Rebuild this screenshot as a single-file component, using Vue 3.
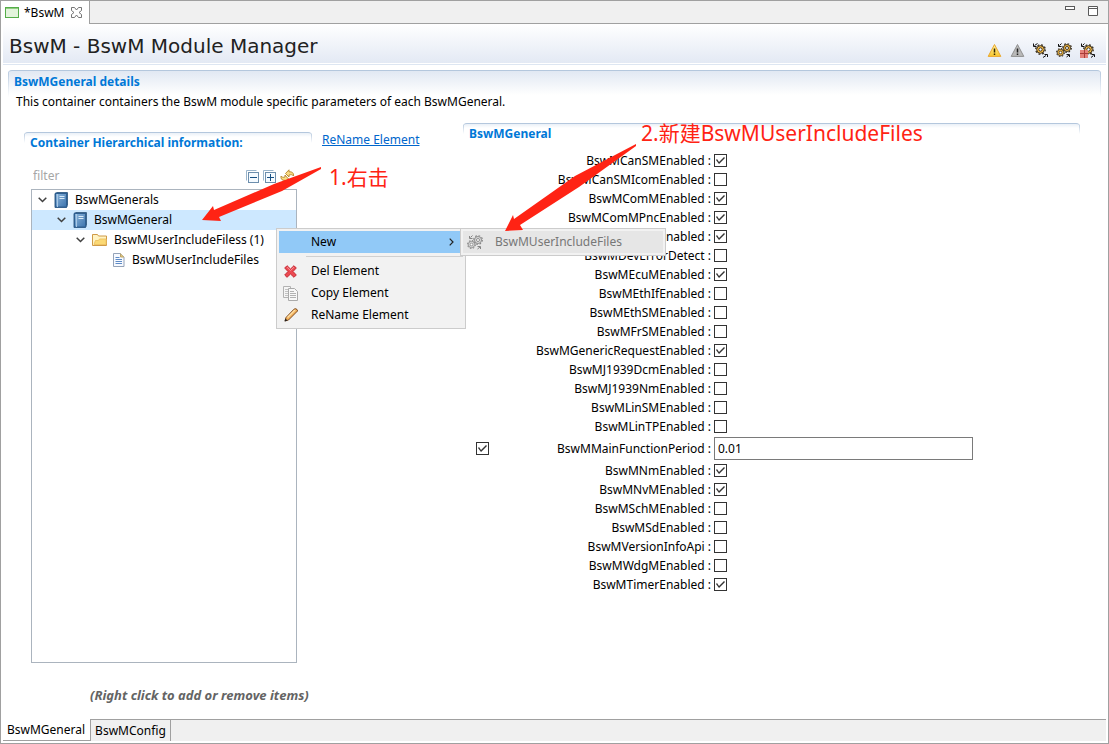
<script setup>
import { ref } from 'vue'

const filter = ref('')
const activePage = ref('BswMGeneral')
const pages = ['BswMGeneral', 'BswMConfig']

const tree = ref([
  { id: 1, level: 0, icon: 'book', label: 'BswMGenerals', open: true },
  { id: 2, level: 1, icon: 'book', label: 'BswMGeneral', open: true },
  { id: 3, level: 2, icon: 'folder', label: 'BswMUserIncludeFiless (1)', open: true },
  { id: 4, level: 3, icon: 'file', label: 'BswMUserIncludeFiles' }
])
const selected = ref(2)

const periodEnabled = ref(true)
const fields = ref([
  { name: 'BswMCanSMEnabled', value: true },
  { name: 'BswMCanSMIcomEnabled', value: false },
  { name: 'BswMComMEnabled', value: true },
  { name: 'BswMComMPncEnabled', value: true },
  { name: 'BswMDcmEnabled', value: true },
  { name: 'BswMDevErrorDetect', value: false },
  { name: 'BswMEcuMEnabled', value: true },
  { name: 'BswMEthIfEnabled', value: false },
  { name: 'BswMEthSMEnabled', value: false },
  { name: 'BswMFrSMEnabled', value: false },
  { name: 'BswMGenericRequestEnabled', value: true },
  { name: 'BswMJ1939DcmEnabled', value: false },
  { name: 'BswMJ1939NmEnabled', value: false },
  { name: 'BswMLinSMEnabled', value: false },
  { name: 'BswMLinTPEnabled', value: false },
  { name: 'BswMMainFunctionPeriod', value: '0.01', text: true },
  { name: 'BswMNmEnabled', value: true },
  { name: 'BswMNvMEnabled', value: true },
  { name: 'BswMSchMEnabled', value: false },
  { name: 'BswMSdEnabled', value: false },
  { name: 'BswMVersionInfoApi', value: false },
  { name: 'BswMWdgMEnabled', value: false },
  { name: 'BswMTimerEnabled', value: true }
])
</script>

<template>
  <div class="editor">
    <!-- shared shapes -->
    <svg class="defs" width="0" height="0" aria-hidden="true">
      <defs>
        <symbol id="gear" viewBox="0 0 10 10">
          <circle cx="5" cy="5" r="4.3" fill="none" stroke="currentColor" stroke-width="1.2" stroke-dasharray="1.7 1.677" />
          <circle cx="5" cy="5" r="3.5" stroke="currentColor" stroke-width="0.9" />
          <circle cx="5" cy="5" r="1.5" fill="#fff" stroke="currentColor" stroke-width="0.9" />
        </symbol>
        <linearGradient id="bookFill" x1="0" y1="0" x2="1" y2="1">
          <stop offset="0" stop-color="#8db6dc" />
          <stop offset="1" stop-color="#3c73ad" />
        </linearGradient>
        <linearGradient id="warnFill" x1="0" y1="0" x2="0" y2="1">
          <stop offset="0" stop-color="#fff3a0" />
          <stop offset="1" stop-color="#f7c62c" />
        </linearGradient>
      </defs>
    </svg>

    <header class="tab-bar">
      <div class="tab">
        <svg width="15" height="12" viewBox="0 0 15 12">
          <rect x="0.5" y="0.5" width="13" height="10" fill="#e3f4dc" stroke="#55ad49" />
          <path d="M1 1.5h12" stroke="#8fce80" />
        </svg>
        <span class="tab-name">*BswM</span>
        <button class="icon-btn" aria-label="Close">
          <svg width="11" height="11" viewBox="0 0 11 11">
            <path d="M0.5 0.5h3l2 2.5 2-2.5h3v3l-2.5 2 2.5 2v3h-3l-2-2.5-2 2.5h-3v-3l2.5-2-2.5-2z" fill="#fff" stroke="#666" stroke-width="0.9" />
          </svg>
        </button>
      </div>
      <div class="window-buttons">
        <button class="icon-btn" aria-label="Minimize">
          <svg width="10" height="10"><rect x="0.5" y="0.5" width="9" height="3" fill="#fff" stroke="#5a5a5a" /></svg>
        </button>
        <button class="icon-btn" aria-label="Maximize">
          <svg width="10" height="10"><path d="M0.5 0.5h9v9h-9zM0.5 2.5h9" fill="#fff" stroke="#5a5a5a" /></svg>
        </button>
      </div>
    </header>

    <div class="form-head">
      <h1>BswM - BswM Module Manager</h1>
      <div class="toolbar">
        <button class="icon-btn" aria-label="Warnings">
          <svg width="15" height="15" viewBox="0 0 15 15">
            <path d="M7.5 1.5 13.8 13.4H1.2z" fill="url(#warnFill)" stroke="#eaa72e" stroke-linejoin="round" />
            <path d="M7.5 5.5v4M7.5 10.5v1.5" stroke="#332500" stroke-width="1.5" />
          </svg>
        </button>
        <button class="icon-btn" aria-label="Warnings disabled">
          <svg width="15" height="15" viewBox="0 0 15 15">
            <path d="M7.5 1.5 13.8 13.4H1.2z" fill="#b9b9b9" stroke="#909090" stroke-linejoin="round" />
            <path d="M7.5 5.5v4M7.5 10.5v1.5" stroke="#222" stroke-width="1.5" />
          </svg>
        </button>
        <button class="icon-btn gear-icon" aria-label="Validate">
          <svg width="15" height="15" viewBox="0 0 15 15">
            <use href="#gear" x="2" y="1" width="11" height="11" />
            <path d="M4.5 0.5 1.5 2.5M0.5 0.5v3h3M10 14.5l3-2M14.500 14v-2.500h-3" fill="none" stroke="#111" />
          </svg>
        </button>
        <button class="icon-btn gear-icon" aria-label="Generate">
          <svg width="16" height="15" viewBox="0 0 16 15">
            <use href="#gear" x="6" y="0" width="10" height="10" />
            <use href="#gear" x="0" y="5" width="9" height="9" />
            <path d="M5.5 0.5 3.5 2.5M2.5 1v2.5h3M10.500 14l2.5-2M13.5 14v-2.500h-3" fill="none" stroke="#111" />
          </svg>
        </button>
        <button class="icon-btn gear-icon" aria-label="Generate all">
          <svg width="16" height="15" viewBox="0 0 16 15">
            <use href="#gear" x="3" y="1" width="11" height="11" />
            <path d="M4.5 0.5 2.5 2.5M1.5 0.5v3h3M11 14.500l2.5-2M14.5 14v-2.500h-3" fill="none" stroke="#111" />
            <rect x="0" y="7" width="8" height="8" fill="#e4817a" />
            <path d="M4.5 7v8M0 10.5h8" stroke="#a93b38" />
          </svg>
        </button>
      </div>
    </div>

    <section class="section details">
      <h2>BswMGeneral details</h2>
      <p>This container containers the BswM module specific parameters of each BswMGeneral.</p>
    </section>

    <main class="columns">
      <div class="left">
        <section class="section">
          <h2>Container Hierarchical information:</h2>
        </section>
        <div class="filter-row">
          <input v-model="filter" type="text" placeholder="filter" aria-label="filter" />
          <button class="icon-btn" aria-label="Collapse all">
            <svg width="13" height="13" viewBox="0 0 13 13">
              <path d="M0.5 10.5v-10h10" fill="none" stroke="#9ab5cc" />
              <rect x="2.5" y="2.5" width="10" height="10" fill="#f4faff" stroke="#6c8ead" />
              <path d="M4 7.5h7" stroke="#174f83" />
            </svg>
          </button>
          <button class="icon-btn" aria-label="Expand all">
            <svg width="13" height="13" viewBox="0 0 13 13">
              <path d="M0.5 10.5v-10h10" fill="none" stroke="#9ab5cc" />
              <rect x="2.5" y="2.5" width="10" height="10" fill="#f4faff" stroke="#6c8ead" />
              <path d="M4 7.5h7M7.5 4v7" stroke="#174f83" />
            </svg>
          </button>
          <button class="icon-btn" aria-label="Refresh">
            <svg width="15" height="14" viewBox="0 0 15 14">
              <path d="M5.5 4.5 9 0.8v2C12 2.5 14 4 13.5 7 12.5 5.5 11 5.5 9 6v2z" fill="#f8db83" stroke="#b5852b" stroke-width="0.9" />
              <path d="M8.5 10 5 13.4v-2C2 11.5 0.5 10 1 7 2 8.5 3.5 8.5 5 8V6z" fill="#f8db83" stroke="#b5852b" stroke-width="0.9" />
            </svg>
          </button>
        </div>
        <ul class="tree">
          <li
            v-for="node in tree"
            :key="node.id"
            :class="['level-' + node.level, { selected: selected === node.id }]"
            @click="selected = node.id"
          >
            <svg class="twistie" width="9" height="6" viewBox="0 0 9 6">
              <path v-if="node.open" d="M0.7 0.7 4.5 4.5 8.3 0.7" fill="none" stroke="#404040" stroke-width="1.5" />
            </svg>
            <svg v-if="node.icon === 'book'" width="14" height="16" viewBox="0 0 14 16">
              <path d="M1 1.5 2.5 0.5h11v13l-1 2H1z" fill="#e4edf5" stroke="#3d658c" />
              <rect x="1.5" y="1.5" width="11" height="13.5" fill="url(#bookFill)" stroke="#2e5f91" />
              <path d="M3.5 2v13" stroke="#a9c9e6" />
              <path d="M5.5 4.5h5M5.5 6.5h5" stroke="#d9eaf7" />
            </svg>
            <svg v-else-if="node.icon === 'folder'" width="15" height="12" viewBox="0 0 15 12">
              <path d="M0.5 11.5v-11h5l1 1.5h8v9.5z" fill="#fff3c3" stroke="#cf9a46" />
              <path d="M2 10.5 3.5 6.5h3l1-1.5h6.500v5.5z" fill="#fbd974" stroke="#efc465" />
            </svg>
            <svg v-else width="12" height="14" viewBox="0 0 12 14">
              <path d="M0.5 0.5h7l3.5 3.5v9.5H0.5z" fill="#f7faff" stroke="#95a3b8" />
              <path d="M7.5 0.5v3.5h3.5" fill="#e7c675" stroke="#b7a46f" />
              <path d="M2.5 4.5h4M2.5 6.5h6.5M2.5 8.5h6.5M2.5 10.5h6.5" stroke="#5e8bc6" />
            </svg>
            <span>{{ node.label }}</span>
          </li>
        </ul>
        <p class="hint">(Right click to add or remove items)</p>
      </div>

      <a class="rename-link" href="#">ReName Element</a>

      <div class="right">
        <section class="section">
          <h2>BswMGeneral</h2>
        </section>
        <div class="fields">
          <div v-for="f in fields" :key="f.name" :class="['field', { tall: f.text }]">
            <input v-if="f.text" v-model="periodEnabled" class="toggle" type="checkbox" :aria-label="'Use ' + f.name" />
            <label :for="f.name">{{ f.name }} :</label>
            <input v-if="f.text" :id="f.name" v-model="f.value" class="value" type="text" />
            <input v-else :id="f.name" v-model="f.value" class="flag" type="checkbox" />
          </div>
        </div>
      </div>
    </main>

    <nav class="pages">
      <button
        v-for="p in pages"
        :key="p"
        :class="{ active: activePage === p }"
        @click="activePage = p"
      >{{ p }}</button>
      <div class="rest"></div>
    </nav>

    <!-- context menu -->
    <div class="menu" role="menu">
      <button class="current" role="menuitem">
        <span class="menu-icon"></span>
        <span>New</span>
        <svg class="more" width="5" height="8" viewBox="0 0 5 8">
          <path d="M0.7 0.7 4 4 0.7 7.3" fill="none" stroke="#222" stroke-width="1.2" />
        </svg>
      </button>
      <hr />
      <button role="menuitem">
        <span class="menu-icon">
          <svg width="15" height="13" viewBox="-1 0 15 13">
            <path d="M0.7 3 3 0.7 6.5 4 10 0.7 12.3 3 9 6.5 12.3 10 10 12.3 6.5 9 3 12.3 0.7 10 4 6.5z" fill="#ec4a51" stroke="#c52b35" stroke-linejoin="round" />
            <path d="M3 2.2 6.5 5.5 10 2.2" fill="none" stroke="#f8929a" />
          </svg>
        </span>
        <span>Del Element</span>
      </button>
      <button role="menuitem">
        <span class="menu-icon">
          <svg width="15" height="15" viewBox="0 0 15 15">
            <path d="M0.5 0.5h7v11h-7z" fill="#f5f5f5" stroke="#b2b2b2" />
            <path d="M2 3.5h3M2 5.5h3M2 7.5h3M2 9.5h3" stroke="#c2c2c2" />
            <path d="M5.5 2.5h6l3 3v9h-9z" fill="#f8f8f8" stroke="#aaa" />
            <path d="M7 5.5h4M7 7.5h6M7 9.5h6M7 11.5h6" stroke="#b2b2b2" />
          </svg>
        </span>
        <span>Copy Element</span>
      </button>
      <button role="menuitem">
        <span class="menu-icon">
          <svg width="15" height="14" viewBox="-1 0 15 14">
            <path d="M1 13 2 9.5 10 1.2Q11.5 0 13 1.5T12.5 4L4.5 12z" fill="#f3b25d" stroke="#7d4a1f" />
            <path d="M3.5 9.5 11 2" stroke="#ffe0a6" stroke-width="1.3" />
            <path d="M0.5 13.5 1.5 10.5 3.5 12.5z" fill="#222" />
          </svg>
        </span>
        <span>ReName Element</span>
      </button>
    </div>
    <div class="menu submenu" role="menu">
      <button class="disabled" role="menuitem">
        <span class="menu-icon">
          <svg width="16" height="15" viewBox="0 0 16 15">
            <use href="#gear" x="6" y="0" width="10" height="10" />
            <use href="#gear" x="0" y="5" width="9" height="9" />
            <path d="M5.5 0.5 3.5 2.5M2.5 1v2.5h3M10.5 14l2.5-2M13.5 14v-2.5h-3" fill="none" stroke="#858585" />
          </svg>
        </span>
        <span>BswMUserIncludeFiles</span>
      </button>
    </div>

    <!-- step notes -->
    <svg class="arrow arrow-one" width="120" height="56" viewBox="0 0 120 56">
      <path d="M0 53 11 39 12 43 72 17 119 0 119 2 80 24 17 50 19 54z" />
    </svg>
    <svg class="arrow arrow-two" width="132" height="88" viewBox="0 0 132 88">
      <path d="M0 87 8 71 9 75 70 32 131 0 131 2 74 43 15 81 18 86z" />
    </svg>
    <span class="note note-one">1.右击</span>
    <span class="note note-two">2.新建BswMUserIncludeFiles</span>
  </div>
</template>

<style>
body {
  margin: 0;
}
</style>

<style scoped>
* {
  box-sizing: border-box;
}
.editor {
  position: relative;
  display: flex;
  flex-direction: column;
  min-height: 100vh;
  border: 1px solid #a0a0a0;
  padding-bottom: 2px;
  background: #fff;
  color: #000;
  font-family: 'Noto Sans', 'Noto Sans CJK SC', sans-serif;
  font-size: 12px;
  line-height: 18px;
}
.defs {
  position: absolute;
}
button,
input {
  margin: 0;
  font: inherit;
  color: inherit;
}
h1,
h2,
p {
  margin: 0;
}
.icon-btn {
  display: flex;
  padding: 0;
  border: 0;
  background: none;
}

/* top tabs */
.tab-bar {
  display: flex;
  justify-content: space-between;
  height: 23px;
  background: #f0f0f0;
  border-bottom: 1px solid #a0a0a0;
}
.tab {
  display: flex;
  align-items: center;
  gap: 4px;
  height: 23px;
  width: 89px;
  padding-left: 4px;
  border-right: 1px solid #a0a0a0;
  background: #fff;
}
.tab-name {
  width: 43px;
}
.window-buttons {
  display: flex;
  gap: 13px;
  padding: 5px 10px 0 0;
}

/* form header */
.form-head {
  display: flex;
  align-items: center;
  justify-content: space-between;
  height: 41px;
  margin: 0 2px;
  padding: 2px 10px 0 6px;
  background: linear-gradient(#fff, #e3e9f4 39px, #fff 39px, #fff 40px, #dde6f2 40px);
}
h1 {
  color: #222;
  font-family: 'DejaVu Sans', sans-serif;
  font-size: 20px;
  font-weight: 400;
  line-height: 38px;
}
.toolbar {
  display: flex;
  gap: 8px;
  padding-top: 10px;
}
.gear-icon {
  color: #33291a;
}
.gear-icon svg {
  fill: #f8bd45;
}

/* sections */
.section {
  border-top: 1px solid #b4c7dd;
  border-radius: 4px 4px 0 0;
  padding: 0 6px;
  background:
    linear-gradient(#b4c7dd, #fff) left top / 1px 10px no-repeat,
    linear-gradient(#b4c7dd, #fff) right top / 1px 10px no-repeat,
    linear-gradient(#eaf0f7, #fff 4px);
}
h2 {
  color: #0078d7;
  font-size: 12px;
  font-weight: 700;
  line-height: 20px;
}
.details {
  height: 53px;
  margin: 5px 7px 0;
  padding-top: 1px;
  background:
    linear-gradient(#b4c7dd, #fff) left top / 1px 26px no-repeat,
    linear-gradient(#b4c7dd, #fff) right top / 1px 26px no-repeat,
    linear-gradient(#e1e8f3, #fff 24px);
}
.details p {
  padding: 1px 2px;
}

/* body */
.columns {
  display: flex;
  flex: 1;
  align-items: stretch;
  padding: 0 28px 0 23px;
}
.left {
  display: flex;
  flex-direction: column;
  width: 288px;
  padding-top: 9px;
}
.filter-row {
  display: flex;
  align-items: center;
  gap: 4px;
  height: 26px;
  margin: 10px 17px 0 9px;
}
.filter-row input {
  flex: 1;
  min-width: 0;
  padding: 0;
  border: 0;
  outline: 0;
}
.filter-row input::placeholder {
  color: #a6a6a6;
}
.tree {
  flex: 1;
  margin: 0 15px 0 7px;
  padding: 0;
  border: 1px solid #abb4be;
  list-style: none;
}
.tree li {
  display: flex;
  align-items: center;
  gap: 7px;
  height: 20px;
  padding-left: 6px;
}
.tree li.level-1 {
  padding-left: 25px;
}
.tree li.level-2 {
  padding-left: 44px;
}
.tree li.level-3 {
  padding-left: 65px;
}
.tree li.selected {
  background: #cde8ff;
}
.hint {
  padding: 23px 0 15px 66px;
  color: #646464;
  font-size: 13px;
  font-weight: 700;
  font-style: italic;
}
.rename-link {
  align-self: flex-start;
  width: 141px;
  margin-top: 8px;
  padding-left: 10px;
  color: #0066cc;
}
.right {
  flex: 1;
  margin-left: 10px;
}
.fields {
  padding-top: 7px;
}
.field {
  display: grid;
  grid-template-columns: 13px 219px minmax(13px, 259px);
  gap: 3px;
  align-items: center;
  height: 19px;
  padding-left: 13px;
}
.field.tall {
  height: 25px;
}
.field label {
  grid-column: 2;
  grid-row: 1;
  text-align: right;
}
.toggle {
  grid-column: 1;
}
.flag,
.value {
  grid-column: 3;
}
.value {
  min-width: 0;
  height: 23px;
  padding: 0 3px;
  border: 1px solid #7a7a7a;
  background: #fff;
}
input[type='checkbox'] {
  appearance: none;
  width: 13px;
  height: 13px;
  border: 1px solid #333;
  background: #fff;
}
input[type='checkbox']:checked::before {
  content: '';
  display: block;
  width: 11px;
  height: 11px;
  background: #333;
  clip-path: polygon(1px 5px, 2px 4px, 4px 7px, 9px 2px, 10px 3px, 4px 9px);
}

/* page tabs */
.pages {
  display: flex;
  height: 22px;
  margin: 0 2px;
}
.pages button {
  padding: 0 4px;
  border: 1px solid #a0a0a0;
  border-width: 1px 1px 0 0;
  background: #f0f0f0;
  line-height: 20px;
}
.pages button.active {
  padding-right: 5px;
  border-width: 0 1px 1px 0;
  background: #fff;
}
.pages .rest {
  flex: 1;
  border-top: 1px solid #a0a0a0;
  background: #f0f0f0;
}

/* menus */
.menu {
  position: absolute;
  left: 275px;
  top: 227px;
  width: 190px;
  padding: 2px;
  border: 1px solid #ccc;
  background: #f2f2f2;
}
.menu button {
  display: flex;
  align-items: center;
  width: 100%;
  height: 22px;
  padding: 0;
  border: 0;
  background: none;
  text-align: left;
}
.menu .current {
  background: #91c9f7;
}
.menu-icon {
  display: flex;
  flex: none;
  width: 32px;
  padding-left: 4px;
}
.menu .more {
  margin-left: auto;
  margin-right: 9px;
}
.menu hr {
  height: 1px;
  margin: 3px 0 3px 27px;
  border: 0;
  background: #d0d0d0;
}
.submenu {
  left: 459px;
  width: 206px;
}
.submenu .disabled {
  background: #e6e6e6;
  color: #777;
}
.submenu .disabled svg {
  color: #858585;
  fill: #ddd;
}

/* notes */
.arrow {
  position: absolute;
  fill: #ff2314;
}
.arrow-one {
  left: 201px;
  top: 166px;
}
.arrow-two {
  left: 504px;
  top: 143px;
}
.note {
  position: absolute;
  color: #ff2314;
  font-size: 21px;
  line-height: 28px;
}
.note-one {
  left: 328px;
  top: 162px;
}
.note-two {
  left: 640px;
  top: 118px;
}
</style>
